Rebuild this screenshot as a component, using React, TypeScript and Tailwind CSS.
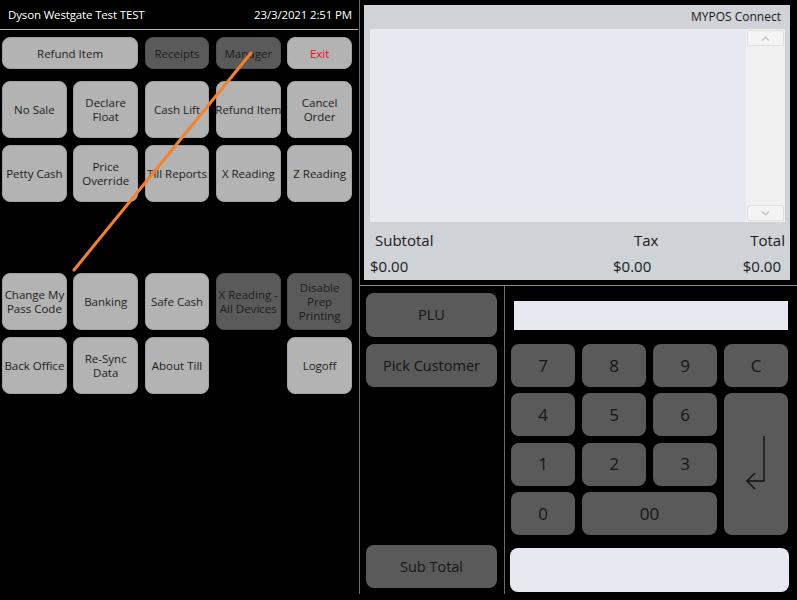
import React from "react";

const font = { fontFamily: '"Open Sans", "Noto Sans", sans-serif' };

function Btn({ label, dark, red, className = "" }: { label: string; dark?: boolean; red?: boolean; className?: string }) {
    const lines = label.split("\n");
    return (
        <div
            className={`flex items-center justify-center text-center rounded-lg text-[11.5px] leading-[14px] whitespace-nowrap pt-px ${dark ? "bg-[#5a5a5a] border border-[#4f4f4f] text-[#1c1c1c]" : "bg-[#b3b3b3] border border-[#a2a2a2] text-[#222]"} ${red ? "text-[#e8101e]" : ""} ${className}`}
        >
            <span>
                {lines.map((l, i) => (
                    <div key={i}>{l}</div>
                ))}
            </span>
        </div>
    );
}

function Key({ label, small, className = "" }: { label: React.ReactNode; small?: boolean; className?: string }) {
    return (
        <div className={`flex items-center justify-center rounded-lg bg-[#5a5a5a] text-[#161616] ${small ? "text-[14.5px]" : "text-[17px]"} ${className}`}>
            {label}
        </div>
    );
}

export default function App() {
    return (
        <div className="relative w-[797px] h-[600px] bg-black flex overflow-hidden" style={font}>
            {/* left side - manager functions */}
            <div className="w-[359px] flex flex-col">
                <div className="h-[30px] flex items-center justify-between pl-[8px] pr-[6px] text-white text-[11.5px] tracking-[-0.15px] border-b border-[#b9b9b9] mr-px">
                    <span>Dyson Westgate Test TEST</span>
                    <span>23/3/2021 2:51 PM</span>
                </div>
                <div className="pl-[2px] w-[352px] mt-[7px] grid grid-cols-5 gap-x-[6.5px] h-[32px]">
                    <Btn label="Refund Item" className="col-span-2" />
                    <Btn label="Receipts" dark />
                    <Btn label="Manager" dark />
                    <Btn label="Exit" red />
                </div>
                <div className="pl-[2px] w-[352px] mt-[12px] grid grid-cols-5 gap-x-[6.5px] gap-y-[7px] grid-rows-[57px_57px_57px_57px_57px]">
                    <Btn label="No Sale" />
                    <Btn label={"Declare\nFloat"} />
                    <Btn label="Cash Lift" />
                    <Btn label="Refund Item" />
                    <Btn label={"Cancel\nOrder"} />

                    <Btn label="Petty Cash" />
                    <Btn label={"Price\nOverride"} />
                    <Btn label="Till Reports" />
                    <Btn label="X Reading" />
                    <Btn label="Z Reading" />

                    <div className="col-span-5" />

                    <Btn label={"Change My\nPass Code"} />
                    <Btn label="Banking" />
                    <Btn label="Safe Cash" />
                    <Btn label={"X Reading -\nAll Devices"} dark />
                    <Btn label={"Disable\nPrep\nPrinting"} dark />

                    <Btn label="Back Office" />
                    <Btn label={"Re-Sync\nData"} />
                    <Btn label="About Till" />
                    <div />
                    <Btn label="Logoff" />
                </div>
            </div>

            <div className="w-px h-[594px] bg-[#6a6a6a]" />

            {/* right side */}
            <div className="flex-1 flex flex-col">
                <div className="mt-[5px] ml-[4px] mr-[7px] h-[275px] bg-[#cfd2d6] flex flex-col pl-[6px] pr-[5px]">
                    <div className="h-[24px] flex items-center justify-end pr-[4px] text-[12px] text-[#1a1a1a]">MYPOS Connect</div>
                    <div className="h-[193px] flex">
                        <div className="flex-1 bg-[#e6e9ef]" />
                        <div className="w-[39px] bg-[#f1f1f1] flex flex-col justify-between py-px px-px">
                            <div className="h-[16px] bg-[#f4f4f4] border border-[#dedede] rounded-[2px] flex items-center justify-center">
                                <svg width="9" height="5" viewBox="0 0 9 5"><path d="M1 4.5 L4.5 1 L8 4.5" fill="none" stroke="#bdbdbd" strokeWidth="1.2" /></svg>
                            </div>
                            <div className="h-[16px] bg-[#f4f4f4] border border-[#dedede] rounded-[2px] flex items-center justify-center">
                                <svg width="9" height="5" viewBox="0 0 9 5"><path d="M1 0.5 L4.5 4 L8 0.5" fill="none" stroke="#bdbdbd" strokeWidth="1.2" /></svg>
                            </div>
                        </div>
                    </div>
                    <div className="flex text-[15px] text-[#1a1a1a] mt-[8px] leading-[20px]">
                        <span className="w-[264px] pl-[5px]">Subtotal</span>
                        <span>Tax</span>
                        <span className="flex-1 text-right">Total</span>
                    </div>
                    <div className="flex text-[15px] text-[#1a1a1a] mt-[6px] leading-[20px]">
                        <span className="w-[243px]">$0.00</span>
                        <span>$0.00</span>
                        <span className="flex-1 text-right pr-[4px]">$0.00</span>
                    </div>
                </div>

                <div className="mt-[5px] h-px bg-[#8a8a8a]" />

                <div className="flex h-[308px]">
                    <div className="w-[144px] flex flex-col pl-[6px] pr-[7px] pt-[7px] pb-[6px] gap-[7px]">
                        <Key label="PLU" small className="h-[44px]" />
                        <Key label="Pick Customer" small className="h-[43px]" />
                        <Key label="Sub Total" small className="h-[43px] mt-auto" />
                    </div>
                    <div className="w-px bg-[#6a6a6a]" />
                    <div className="flex-1 flex flex-col pl-[6px] pr-[8px]">
                        <div className="mt-[15px] ml-[3px] mr-px h-[29px] bg-[#e6e9f0]" />
                        <div className="mt-[14px] grid grid-cols-[64px_64px_64px_64px] gap-x-[7px] grid-rows-[43px_43px_43px_43px] gap-y-[6.3px]">
                            <Key label="7" />
                            <Key label="8" />
                            <Key label="9" />
                            <Key label="C" />
                            <Key label="4" />
                            <Key label="5" />
                            <Key label="6" />
                            <Key
                                className="row-span-3"
                                label={
                                    <svg width="22" height="58" viewBox="0 0 22 58">
                                        <path d="M19 1 V46 H2 M10 38 L2 46 L10 54" fill="none" stroke="#111" strokeWidth="1.4" />
                                    </svg>
                                }
                            />
                            <Key label="1" />
                            <Key label="2" />
                            <Key label="3" />
                            <Key label="0" />
                            <Key label="00" className="col-span-2" />
                        </div>
                        <div className="mt-[13px] h-[44px] rounded-lg bg-[#e6e9f0] -ml-px" />
                    </div>
                </div>
            </div>

            {/* orange annotation stroke */}
            <svg className="absolute left-0 top-0 pointer-events-none" width="797" height="600">
                <line x1="74" y1="270" x2="251" y2="53" stroke="#f5822a" strokeWidth="3" strokeLinecap="round" />
            </svg>
        </div>
    );
}
